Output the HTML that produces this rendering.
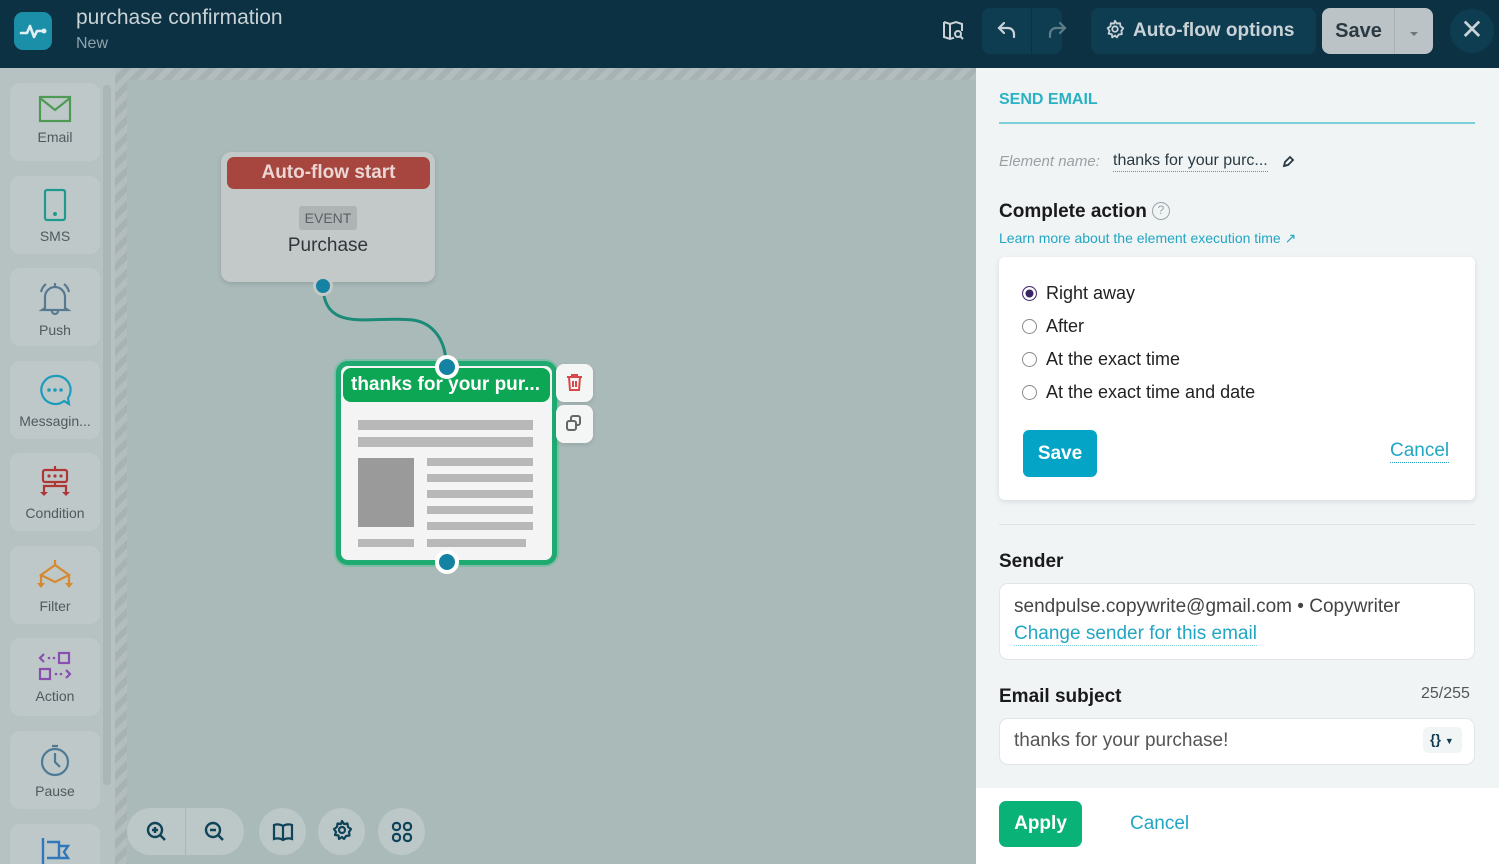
<!DOCTYPE html>
<html style="width:1499px;height:864px;overflow:hidden"><head><meta charset="utf-8"><style>
*{box-sizing:border-box;margin:0;padding:0}
body{width:1499px;height:864px;overflow:hidden;font-family:"Liberation Sans",sans-serif;position:relative;background:#a9bab9}
.abs{position:absolute}
.hdr{left:0;top:0;width:1499px;height:68px;background:#0c3143}
.side{left:0;top:68px;width:115px;height:796px;background:#b6c1c2}
.item{position:absolute;left:10px;width:90px;height:78px;background:#bec8c9;border-radius:10px;text-align:center;font-size:14px;color:#4e5a5f;overflow:hidden}
.item svg{display:block;margin:12px auto 6px}
.stripe{background:repeating-linear-gradient(135deg,#b3bdbe 0 6px,#a7b2b3 6px 12px)}
.panel{left:976px;top:68px;width:523px;height:796px;background:#f0f4f5}
.rb{display:inline-block;width:15px;height:15px;border:1.5px solid #8a8a8a;border-radius:50%;vertical-align:-2px;margin-right:9px;background:#fff}
.opt{font-size:18px;color:#222;height:33px}
.zb{position:absolute;top:808px;height:47px;background:#bcc7c8;border-radius:24px}
</style></head><body>
<div class="abs hdr"></div>
<div class="abs" style="left:14px;top:12px;width:38px;height:38px;border-radius:9px;background:#1b8fa8">
<svg width="38" height="38" viewBox="0 0 38 38"><path d="M7 21h6l3-7 4 11 3-6h6" stroke="#dfeff3" stroke-width="2.6" fill="none" stroke-linecap="round" stroke-linejoin="round"/><circle cx="30" cy="19" r="2.5" fill="#dfeff3"/></svg></div>
<div class="abs" style="left:76px;top:6px;font-size:21px;color:#c9d2d6">purchase confirmation</div>
<div class="abs" style="left:76px;top:35px;font-size:16px;color:#8fa3ac">New</div>
<svg class="abs" style="left:942px;top:19px" width="24" height="22" viewBox="0 0 24 22"><path d="M2 3l6 2 6-2 6 2v7M2 3v15l6 2 4-1.3M8 5v15" stroke="#c9d2d6" stroke-width="2" fill="none"/><circle cx="16" cy="15" r="3" stroke="#c9d2d6" stroke-width="2" fill="none"/><path d="M18 17l3 3" stroke="#c9d2d6" stroke-width="2"/></svg>
<div class="abs" style="left:982px;top:8px;width:80px;height:46px;background:#0e3d52;border-radius:8px"></div>
<div class="abs" style="left:1031px;top:8px;width:1px;height:46px;background:#0a3243"></div>
<svg class="abs" style="left:996px;top:20px" width="22" height="20" viewBox="0 0 22 20"><path d="M8 3L3 8l5 5M3 8h9a6 6 0 0 1 6 6v3" stroke="#c9d2d6" stroke-width="2.2" fill="none" stroke-linecap="round"/></svg>
<svg class="abs" style="left:1046px;top:20px" width="22" height="20" viewBox="0 0 22 20"><path d="M14 3l5 5-5 5M19 8h-9a6 6 0 0 0-6 6v3" stroke="#5f7c88" stroke-width="2.2" fill="none" stroke-linecap="round"/></svg>
<div class="abs" style="left:1091px;top:8px;width:225px;height:46px;background:#0e3d52;border-radius:8px;color:#c9d2d6;font-size:19px;font-weight:bold;line-height:46px;padding-left:42px">Auto-flow options</div>
<svg class="abs" style="left:1104px;top:19px" width="22" height="22" viewBox="0 0 24 24"><path d="M12 2l2 3 3.5-.5.5 3.5 3 2-2 3 .5 3.5-3.5.5-2 3-2-2-3 2-.5-3.5L5 16l1-3-2-3 3-2 .5-3.5L11 5z" stroke="#c9d2d6" stroke-width="2" fill="none" stroke-linejoin="round"/><circle cx="12" cy="11" r="3" stroke="#c9d2d6" stroke-width="2" fill="none"/></svg>
<div class="abs" style="left:1322px;top:8px;width:111px;height:46px;background:#bcc3c6;border-radius:8px"></div>
<div class="abs" style="left:1322px;top:8px;width:73px;height:46px;line-height:46px;text-align:center;font-size:20px;font-weight:bold;color:#2b3a42">Save</div>
<div class="abs" style="left:1394px;top:8px;width:1px;height:46px;background:#a9b1b4"></div>
<div class="abs" style="left:1410px;top:32px;border:4px solid transparent;border-top:4px solid #6a767b"></div>
<div class="abs" style="left:1450px;top:9px;width:44px;height:44px;border-radius:50%;background:#0e3d52;color:#c9d2d6;font-size:28px;line-height:42px;text-align:center">✕</div>

<div class="abs side"></div>
<div class="abs stripe" style="left:115px;top:68px;width:12px;height:796px"></div>
<div class="abs stripe" style="left:115px;top:68px;width:861px;height:12px"></div>
<div class="abs" style="left:103px;top:85px;width:8px;height:700px;background:#aab5b6;border-radius:4px"></div>

<div class="item" style="top:83px"><svg width="34" height="28" viewBox="0 0 34 28"><rect x="2" y="2" width="30" height="24" stroke="#4e9a55" stroke-width="2.2" fill="none"/><path d="M2 3l15 12 15-12" stroke="#4e9a55" stroke-width="2.2" fill="none"/></svg>Email</div>
<div class="item" style="top:176px"><svg width="26" height="34" viewBox="0 0 26 34"><rect x="3" y="2" width="20" height="30" rx="2" stroke="#1f9a8d" stroke-width="2.2" fill="none"/><circle cx="13" cy="26" r="2" fill="#1f9a8d"/></svg>SMS</div>
<div class="item" style="top:268px"><svg width="38" height="36" viewBox="0 0 38 36"><path d="M9 28V17a10 10 0 0 1 20 0v11l3 2H6z" stroke="#587a90" stroke-width="2.2" fill="none"/><path d="M16 31a3 3 0 0 0 6 0M19 3v4M5 12a14 14 0 0 1 5-8M33 12a14 14 0 0 0-5-8" stroke="#587a90" stroke-width="2.2" fill="none"/></svg>Push</div>
<div class="item" style="top:361px"><svg width="36" height="34" viewBox="0 0 36 34"><path d="M18 3a14 14 0 1 0 9 25l5 3-1-6A14 14 0 0 0 18 3z" stroke="#1d9bbb" stroke-width="2.2" fill="none"/><circle cx="12" cy="17" r="1.8" fill="#1d9bbb"/><circle cx="18" cy="17" r="1.8" fill="#1d9bbb"/><circle cx="24" cy="17" r="1.8" fill="#1d9bbb"/></svg>Messagin...</div>
<div class="item" style="top:453px"><svg width="38" height="34" viewBox="0 0 38 34"><path d="M19 1v4" stroke="#b03636" stroke-width="2.2"/><rect x="7" y="5" width="24" height="12" rx="2" stroke="#b03636" stroke-width="2.2" fill="none"/><circle cx="13" cy="11" r="1.6" fill="#b03636"/><circle cx="19" cy="11" r="1.6" fill="#b03636"/><circle cx="25" cy="11" r="1.6" fill="#b03636"/><path d="M19 17v4H8v7M19 21h11v7" stroke="#b03636" stroke-width="2.2" fill="none"/><path d="M4 27h8l-4 4zM26 27h8l-4 4z" fill="#b03636"/></svg>Condition</div>
<div class="item" style="top:546px"><svg width="46" height="34" viewBox="0 0 46 34"><path d="M23 2v5M23 7L9 17l14 7 14-7zM9 17v9M37 17v9" stroke="#d6892f" stroke-width="2.2" fill="none"/><path d="M5 25h8l-4 5zM33 25h8l-4 5z" fill="#d6892f"/></svg>Filter</div>
<div class="item" style="top:638px"><svg width="36" height="32" viewBox="0 0 36 32"><path d="M7 4l-4 4 4 4" stroke="#8a4db0" stroke-width="2.2" fill="none"/><rect x="22" y="3" width="10" height="10" stroke="#8a4db0" stroke-width="2.2" fill="none"/><rect x="3" y="19" width="10" height="10" stroke="#8a4db0" stroke-width="2.2" fill="none"/><path d="M29 20l4 4-4 4" stroke="#8a4db0" stroke-width="2.2" fill="none"/><circle cx="12" cy="8" r="1.3" fill="#8a4db0"/><circle cx="17" cy="8" r="1.3" fill="#8a4db0"/><circle cx="19" cy="24" r="1.3" fill="#8a4db0"/><circle cx="24" cy="24" r="1.3" fill="#8a4db0"/></svg>Action</div>
<div class="item" style="top:731px"><svg width="34" height="34" viewBox="0 0 34 34"><circle cx="17" cy="19" r="13" stroke="#4f7a95" stroke-width="2.2" fill="none"/><path d="M14 3h6M17 10v9l5 5" stroke="#4f7a95" stroke-width="2.2" fill="none"/></svg>Pause</div>
<div class="item" style="top:824px;height:40px;border-radius:10px 10px 0 0"><svg width="34" height="34" viewBox="0 0 34 34"><path d="M5 2v32M9 6h12v16H9M21 10h9l-4 6 4 6H21" stroke="#2f78b9" stroke-width="2.4" fill="none"/></svg></div>

<!-- start node -->
<div class="abs" style="left:221px;top:152px;width:214px;height:130px;background:#c3c8c8;border-radius:10px;box-shadow:0 2px 5px rgba(0,0,0,.12)"></div>
<div class="abs" style="left:227px;top:157px;width:203px;height:32px;background:#a6463f;border-radius:7px;color:#ebd6d3;font-size:19px;font-weight:bold;text-align:center;line-height:31px">Auto-flow start</div>
<div class="abs" style="left:299px;top:206px;width:58px;height:24px;background:#aeb3b4;border-radius:3px;color:#5a6165;font-size:14px;text-align:center;line-height:24px">EVENT</div>
<div class="abs" style="left:221px;top:235px;width:214px;text-align:center;font-size:19px;color:#30373b">Purchase</div>
<svg class="abs" style="left:310px;top:275px" width="150" height="100" viewBox="0 0 150 100"><path d="M13 10c0 50 50 30 90 35 20 3 33 20 33 45" stroke="#1c8a78" stroke-width="3" fill="none"/></svg>
<div class="abs" style="left:313px;top:276px;width:20px;height:20px;border-radius:50%;background:#1483a3;border:3px solid #c3c8c8"></div>

<!-- email node -->
<div class="abs" style="left:336px;top:361px;width:221px;height:204px;border:5px solid #1faa72;border-radius:12px;background:#f4f4f4;box-shadow:0 0 0 2px #7fbca5"></div>
<div class="abs" style="left:343px;top:368px;width:207px;height:34px;background:#0da654;border-radius:8px;color:#fff;font-size:19px;font-weight:bold;line-height:34px;padding-left:8px">thanks for your pur...</div>
<div class="abs" style="left:358px;top:420px;width:175px;height:10px;background:#b8b8b8"></div>
<div class="abs" style="left:358px;top:437px;width:175px;height:10px;background:#b8b8b8"></div>
<div class="abs" style="left:358px;top:458px;width:56px;height:69px;background:#9a9a9a"></div>
<div class="abs" style="left:427px;top:458px;width:106px;height:8px;background:#b8b8b8"></div>
<div class="abs" style="left:427px;top:474px;width:106px;height:8px;background:#b8b8b8"></div>
<div class="abs" style="left:427px;top:490px;width:106px;height:8px;background:#b8b8b8"></div>
<div class="abs" style="left:427px;top:506px;width:106px;height:8px;background:#b8b8b8"></div>
<div class="abs" style="left:427px;top:522px;width:106px;height:8px;background:#b8b8b8"></div>
<div class="abs" style="left:358px;top:539px;width:56px;height:8px;background:#b8b8b8"></div>
<div class="abs" style="left:427px;top:539px;width:99px;height:8px;background:#b8b8b8"></div>
<div class="abs" style="left:435px;top:355px;width:24px;height:24px;border-radius:50%;background:#1483a3;border:4px solid #fff"></div>
<div class="abs" style="left:435px;top:550px;width:24px;height:24px;border-radius:50%;background:#1483a3;border:4px solid #fff"></div>
<div class="abs" style="left:556px;top:364px;width:37px;height:38px;background:#f4f6f6;border-radius:8px;box-shadow:0 2px 4px rgba(0,0,0,.1)"><svg width="37" height="38" viewBox="0 0 37 38"><path d="M11 13h15M16 13v-2h5v2M13 13l1 13h9l1-13M17 17v6M20 17v6" stroke="#d94848" stroke-width="2" fill="none"/></svg></div>
<div class="abs" style="left:556px;top:405px;width:37px;height:38px;background:#f4f6f6;border-radius:8px;box-shadow:0 2px 4px rgba(0,0,0,.1)"><svg width="37" height="38" viewBox="0 0 37 38"><rect x="11" y="16" width="9" height="9" rx="2" stroke="#666" stroke-width="2" fill="none"/><path d="M15 16v-3a2 2 0 0 1 2-2h5a2 2 0 0 1 2 2v5a2 2 0 0 1-2 2h-2" stroke="#666" stroke-width="2" fill="none"/></svg></div>

<!-- zoom bar -->
<div class="zb" style="left:127px;width:117px"></div>
<div class="abs" style="left:185px;top:808px;width:1px;height:47px;background:#aab5b6"></div>
<div class="zb" style="left:259px;width:47px"></div>
<div class="zb" style="left:318px;width:47px"></div>
<div class="zb" style="left:378px;width:47px"></div>
<svg class="abs" style="left:145px;top:820px" width="24" height="24" viewBox="0 0 24 24"><circle cx="10" cy="10" r="7" stroke="#0f4358" stroke-width="2.4" fill="none"/><path d="M15 15l5 5M7 10h6M10 7v6" stroke="#0f4358" stroke-width="2.4"/></svg>
<svg class="abs" style="left:203px;top:820px" width="24" height="24" viewBox="0 0 24 24"><circle cx="10" cy="10" r="7" stroke="#0f4358" stroke-width="2.4" fill="none"/><path d="M15 15l5 5M7 10h6" stroke="#0f4358" stroke-width="2.4"/></svg>
<svg class="abs" style="left:271px;top:820px" width="24" height="24" viewBox="0 0 24 24"><path d="M12 6C9 4 6 4 3 5v14c3-1 6-1 9 1 3-2 6-2 9-1V5c-3-1-6-1-9 1zM12 6v14" stroke="#0f4358" stroke-width="2.2" fill="none"/></svg>
<svg class="abs" style="left:330px;top:819px" width="24" height="24" viewBox="0 0 24 24"><path d="M12 2l2 3 3.5-.5.5 3.5 3 2-2 3 .5 3.5-3.5.5-2 3-2-2-3 2-.5-3.5L5 16l1-3-2-3 3-2 .5-3.5L11 5z" stroke="#0f4358" stroke-width="2.2" fill="none" stroke-linejoin="round"/><circle cx="12" cy="11" r="3" stroke="#0f4358" stroke-width="2.2" fill="none"/></svg>
<svg class="abs" style="left:390px;top:820px" width="24" height="24" viewBox="0 0 24 24"><rect x="3" y="3" width="7" height="7" rx="3" stroke="#0f4358" stroke-width="2.2" fill="none"/><rect x="14" y="3" width="7" height="7" rx="3" stroke="#0f4358" stroke-width="2.2" fill="none"/><rect x="3" y="14" width="7" height="7" rx="3" stroke="#0f4358" stroke-width="2.2" fill="none"/><rect x="14" y="14" width="7" height="7" rx="3" stroke="#0f4358" stroke-width="2.2" fill="none"/></svg>

<!-- right panel -->
<div class="abs panel"></div>
<div class="abs" style="left:999px;top:91px;font-size:16px;font-weight:bold;color:#2ab2c4">SEND EMAIL</div>
<div class="abs" style="left:999px;top:122px;width:476px;height:2px;background:#7dd0d8"></div>
<div class="abs" style="left:999px;top:153px;font-size:15px;color:#9aa0a3;font-style:italic">Element name:</div>
<div class="abs" style="left:1113px;top:152px;font-size:16px;color:#2b3a42;border-bottom:1px dotted #7a8a92;padding-bottom:1px">thanks for your purc...</div>
<svg class="abs" style="left:1281px;top:155px" width="14" height="14" viewBox="0 0 14 14"><path d="M3 11l1-4 5-5 3 3-5 5zM3 11l3-1" stroke="#2b3a42" stroke-width="1.8" fill="none"/></svg>
<div class="abs" style="left:999px;top:201px;font-size:19px;font-weight:bold;color:#1a1a1a">Complete action</div>
<div class="abs" style="left:1152px;top:202px;width:18px;height:18px;border:1.5px solid #9aa5a9;border-radius:50%;font-size:12px;color:#9aa5a9;text-align:center;line-height:15px">?</div>
<div class="abs" style="left:999px;top:230px;font-size:14px;color:#22a6c4">Learn more about the element execution time ↗</div>
<div class="abs" style="left:999px;top:257px;width:476px;height:243px;background:#fff;border-radius:6px;box-shadow:0 2px 6px rgba(0,0,0,.1)"></div>
<div class="abs" style="left:1022px;top:283px">
<div class="opt"><span class="rb" style="border-color:#4a2d70;box-shadow:inset 0 0 0 2.5px #fff;background:#3b2364"></span>Right away</div>
<div class="opt"><span class="rb"></span>After</div>
<div class="opt"><span class="rb"></span>At the exact time</div>
<div class="opt"><span class="rb"></span>At the exact time and date</div>
</div>
<div class="abs" style="left:1023px;top:430px;width:74px;height:47px;background:#04a4c7;border-radius:6px;color:#fff;font-size:19px;font-weight:bold;text-align:center;line-height:47px">Save</div>
<div class="abs" style="left:1390px;top:440px;font-size:19px;color:#22a6c4;border-bottom:1px dotted #22a6c4">Cancel</div>
<div class="abs" style="left:999px;top:524px;width:476px;height:1px;background:#dde2e4"></div>
<div class="abs" style="left:999px;top:551px;font-size:19px;font-weight:bold;color:#1a1a1a">Sender</div>
<div class="abs" style="left:999px;top:583px;width:476px;height:77px;background:#fff;border:1px solid #e0e5e7;border-radius:9px"></div>
<div class="abs" style="left:1014px;top:596px;font-size:19px;color:#444">sendpulse.copywrite@gmail.com • Copywriter</div>
<div class="abs" style="left:1014px;top:623px;font-size:19px;color:#22a6c4;border-bottom:1px dotted #7fcde0">Change sender for this email</div>
<div class="abs" style="left:999px;top:686px;font-size:19px;font-weight:bold;color:#1a1a1a">Email subject</div>
<div class="abs" style="left:1421px;top:685px;font-size:16px;color:#555">25/255</div>
<div class="abs" style="left:999px;top:718px;width:476px;height:47px;background:#fff;border:1px solid #e0e5e7;border-radius:9px"></div>
<div class="abs" style="left:1014px;top:730px;font-size:19px;color:#555">thanks for your purchase!</div>
<div class="abs" style="left:1423px;top:727px;width:39px;height:26px;background:#f2f5f6;border-radius:5px;font-size:14px;font-weight:bold;color:#0f3a4e;line-height:24px;padding-left:7px">{}<span style="font-size:9px;margin-left:4px">▼</span></div>
<div class="abs" style="left:976px;top:788px;width:523px;height:76px;background:#fff"></div>
<div class="abs" style="left:999px;top:801px;width:83px;height:46px;background:#09b277;border-radius:7px;color:#fff;font-size:19px;font-weight:bold;text-align:center;line-height:46px">Apply</div>
<div class="abs" style="left:1130px;top:813px;font-size:19px;color:#22a6c4">Cancel</div>
</body></html>
